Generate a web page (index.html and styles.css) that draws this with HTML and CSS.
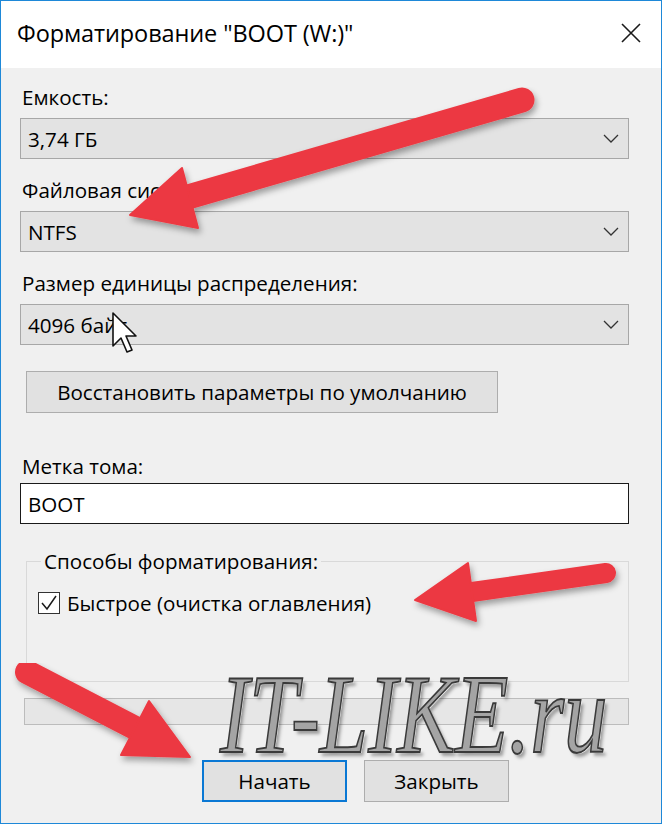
FILE: index.html
```html
<!DOCTYPE html>
<html lang="ru">
<head>
  <meta charset="UTF-8" />
  <title>Форматирование "BOOT (W:)"</title>
  <link rel="stylesheet" href="styles.css">
</head>
<body>
  <div class="window">

    <!-- Title bar -->
    <div class="titlebar">
      <span class="title">Форматирование "BOOT (W:)"</span>
      <svg class="close" width="22" height="22" viewBox="0 0 22 22">
        <path d="M2 2 L20 20 M20 2 L2 20" stroke="#1a1a1a" stroke-width="1.6" fill="none"/>
      </svg>
    </div>

    <!-- Dialog content -->
    <div class="content">
      <div class="label first">Емкость:</div>
      <div class="combo">
        <span>3,74 ГБ</span>
        <svg class="chevron" width="16" height="9" viewBox="0 0 16 9"><path d="M1 1 L8 8 L15 1" stroke="#333" stroke-width="1.3" fill="none"/></svg>
      </div>

      <div class="label">Файловая система:</div>
      <div class="combo">
        <span>NTFS</span>
        <svg class="chevron" width="16" height="9" viewBox="0 0 16 9"><path d="M1 1 L8 8 L15 1" stroke="#333" stroke-width="1.3" fill="none"/></svg>
      </div>

      <div class="label">Размер единицы распределения:</div>
      <div class="combo">
        <span>4096 байт</span>
        <svg class="chevron" width="16" height="9" viewBox="0 0 16 9"><path d="M1 1 L8 8 L15 1" stroke="#333" stroke-width="1.3" fill="none"/></svg>
      </div>

      <div class="btn restore">Восстановить параметры по умолчанию</div>

      <div class="label volume">Метка тома:</div>
      <div class="textbox">BOOT</div>

      <fieldset class="group">
        <legend>Способы форматирования:</legend>
        <div class="check">
          <span class="box">
            <svg width="18" height="18" viewBox="0 0 18 18"><path d="M2 9 L7 15 L16 2" stroke="#1a1a1a" stroke-width="1.5" fill="none"/></svg>
          </span>
          Быстрое (очистка оглавления)
        </div>
      </fieldset>

      <div class="progress"></div>

      <div class="actions">
        <div class="btn default">Начать</div>
        <div class="btn">Закрыть</div>
      </div>
    </div>

    <!-- Overlays: watermark, arrows, pointer -->
    <div class="watermark">IT-LIKE.ru</div>

    <svg class="marks" width="662" height="824" viewBox="0 0 662 824">
      <defs>
        <filter id="shadow" x="-10%" y="-10%" width="120%" height="130%">
          <feDropShadow dx="2" dy="4" stdDeviation="3" flood-color="#000" flood-opacity="0.35"/>
        </filter>
      </defs>
      <g fill="#ec3942" stroke="#ec3942" filter="url(#shadow)">
        <line x1="522" y1="100" x2="188" y2="197" stroke-width="25" stroke-linecap="round"/>
        <polygon points="130,215 182,168 198,228" stroke-width="2" stroke-linejoin="round"/>
      </g>
      <g fill="#ec3942" stroke="#ec3942" filter="url(#shadow)">
        <line x1="606" y1="573" x2="472" y2="592" stroke-width="20" stroke-linecap="round"/>
        <polygon points="415,600 468,563 476,621" stroke-width="2" stroke-linejoin="round"/>
      </g>
      <g fill="#ec3942" stroke="#ec3942" filter="url(#shadow)">
        <line x1="27" y1="672" x2="137" y2="729" stroke-width="24" stroke-linecap="round"/>
        <polygon points="190,757 149,701 121,755" stroke-width="2" stroke-linejoin="round"/>
      </g>
      <path d="M113 313 L113 346 L121 338 L127 352 L132 350 L126 336 L136 336 Z" fill="#fff" stroke="#111" stroke-width="1.6" stroke-linejoin="round"/>
    </svg>
  </div>
</body>
</html>
```

FILE: styles.css
```css
/* Base */
* {
  margin: 0;
  padding: 0;
  box-sizing: border-box;
}

body {
  background: #f0f0f0;
  font-family: "Open Sans", "Noto Sans", sans-serif;
  color: #000;
}

/* Window frame */
.window {
  position: relative;
  width: 662px;
  height: 824px;
  border: 1px solid #1e88d8;
  background: #f0f0f0;
  overflow: hidden;
}

.titlebar {
  display: flex;
  justify-content: space-between;
  align-items: center;
  height: 67px;
  background: #fff;
  padding: 0 19px 4px 16px;
}

.title {
  font-size: 23.5px;
  letter-spacing: -0.1px;
}

/* Content */
.content {
  padding: 0 32px 0 19px;
  font-size: 20.6px;
}

.label {
  line-height: 26px;
  margin-top: 18px;
  padding-left: 2px;
}

.label.first {
  margin-top: 16px;
}

.label.volume {
  margin-top: 40px;
}

.combo {
  display: flex;
  justify-content: space-between;
  align-items: center;
  height: 41px;
  margin-top: 8px;
  padding: 0 9px 0 7px;
  background: #e3e3e3;
  border: 1px solid #a7a7a7;
}

.btn {
  display: flex;
  justify-content: center;
  align-items: center;
  height: 42px;
  background: #e1e1e1;
  border: 1px solid #adadad;
}

.btn.restore {
  width: 472px;
  margin: 26px 0 0 6px;
}

.textbox {
  display: flex;
  align-items: center;
  height: 41px;
  margin-top: 4px;
  padding-left: 7px;
  background: #fff;
  border: 1px solid #1a1a1a;
}

/* Group box */
.group {
  margin: 24px 0 0 6px;
  padding: 16px 0 65px 11px;
  border: 1px solid #d9d9d9;
}

.group legend {
  line-height: 26px;
  padding: 0 3px;
  margin-left: 3px;
}

.check {
  display: flex;
  align-items: center;
  gap: 7px;
  height: 26px;
}

.check .box {
  display: flex;
  justify-content: center;
  align-items: center;
  width: 22px;
  height: 22px;
  border: 1px solid #333;
  background: #fff;
}

.progress {
  height: 27px;
  margin: 16px 0 0 4px;
  background: #e6e6e6;
  border: 1px solid #bcbcbc;
}

/* Bottom buttons */
.actions {
  display: flex;
  gap: 17px;
  margin-top: 35px;
  padding-left: 182px;
}

.actions .btn {
  width: 145px;
}

.actions .btn.default {
  border: 2px solid #0a78d4;
}

/* Overlays */
.watermark {
  position: absolute;
  left: 219px;
  top: 679px;
  font-family: "Liberation Serif", serif;
  font-style: italic;
  font-size: 87px;
  line-height: 70px;
  color: #a4a4a4;
  -webkit-text-stroke: 1.5px #3a3a3a;
  text-shadow: 1px 1px 0 #fff, 3px 3px 3px rgba(0, 0, 0, 0.35);
  transform: scaleY(1.28);
  transform-origin: left center;
}

.marks {
  position: absolute;
  left: -1px;
  top: -1px;
}
```
